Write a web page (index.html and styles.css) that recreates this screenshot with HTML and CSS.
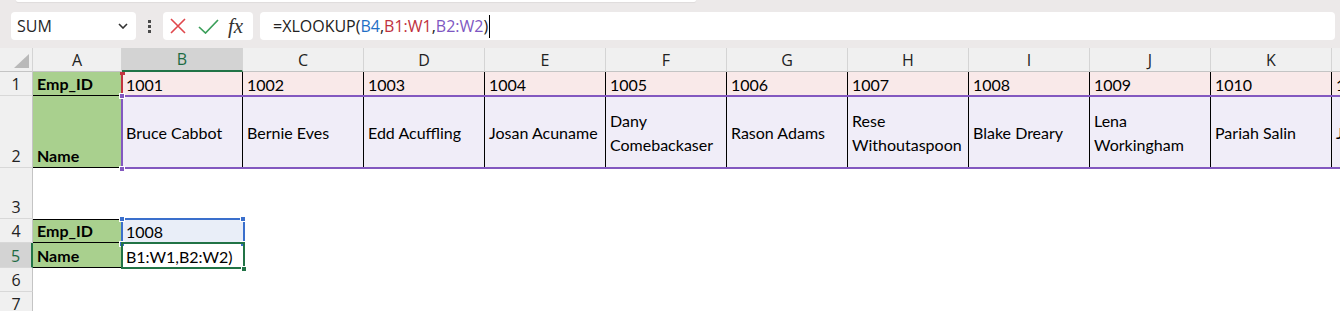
FILE: index.html
```html
<!DOCTYPE html>
<html>
<head>
<meta charset="utf-8">
<link rel="stylesheet" href="styles.css">
</head>
<body>
<div class="top"><div class="ribbon-edge"></div></div>
<div class="fbar">
  <div class="namebox"><span>SUM</span>
    <svg class="chev" width="10" height="6" viewBox="0 0 10 6"><path d="M1 1 L5 5 L9 1" fill="none" stroke="#333" stroke-width="1.6"/></svg>
  </div>
  <div class="dots"><i></i><i></i><i></i></div>
  <div class="fxbox">
    <svg width="16" height="16" viewBox="0 0 16 16"><path d="M1 1 L15 15 M15 1 L1 15" stroke="#e0474c" stroke-width="1.6" fill="none"/></svg>
    <svg class="check" width="21" height="15" viewBox="0 0 21 15"><path d="M1 8 L7.5 14 L20 1" stroke="#3b9f5a" stroke-width="1.7" fill="none"/></svg>
    <span class="fx">fx</span>
  </div>
  <div class="formula">=XLOOKUP(<span class="fb">B4</span>,<span class="fr">B1:W1</span>,<span class="fp">B2:W2</span>)<span class="caret"></span></div>
</div>

<div class="sheet">
  <div class="h corner"><svg width="16" height="15" viewBox="0 0 16 15"><polygon points="15,0 15,14 0,14" fill="#b9b9b9"/></svg></div>
  <div class="h">A</div><div class="h sel">B</div><div class="h">C</div><div class="h">D</div><div class="h">E</div><div class="h">F</div><div class="h">G</div><div class="h">H</div><div class="h">I</div><div class="h">J</div><div class="h">K</div><div class="h">L</div>

  <div class="r">1</div>
  <div class="c g b bb">Emp_ID</div>
  <div class="c p1">1001</div><div class="c p1">1002</div><div class="c p1">1003</div><div class="c p1">1004</div><div class="c p1">1005</div><div class="c p1">1006</div><div class="c p1">1007</div><div class="c p1">1008</div><div class="c p1">1009</div><div class="c p1">1010</div><div class="c p1">1011</div>

  <div class="r">2</div>
  <div class="c g b bb">Name</div>
  <div class="c p2">Bruce Cabbot</div><div class="c p2">Bernie Eves</div><div class="c p2">Edd Acuffling</div><div class="c p2">Josan Acuname</div><div class="c p2">Dany Comebackaser</div><div class="c p2">Rason Adams</div><div class="c p2">Rese Withoutaspoon</div><div class="c p2">Blake Dreary</div><div class="c p2">Lena Workingham</div><div class="c p2">Pariah Salin</div><div class="c p2">Jo Mama</div>

  <div class="r">3</div><div class="c rest"></div>

  <div class="r">4</div>
  <div class="c g b bb bt">Emp_ID</div>
  <div class="c bl4">1008</div>
  <div class="c rest2"></div>

  <div class="r rsel">5</div>
  <div class="c g b bb">Name</div>
  <div class="c">B1:W1,B2:W2)</div>
  <div class="c rest2"></div>

  <div class="r">6</div><div class="c rest"></div>
  <div class="r">7</div><div class="c rest"></div>

  <div class="ov red-line"></div>
  <div class="ov red-h"></div>
  <div class="ov purple"></div>
  <div class="ov ph ph1"></div>
  <div class="ov ph ph2"></div>
  <div class="ov blue"></div>
  <div class="ov bh bh1"></div>
  <div class="ov bh bh2"></div>
  <div class="ov bh bh3"></div>
  <div class="ov bh bh4"></div>
  <div class="ov green"></div>
  <div class="ov fill"></div>
</div>
</body>
</html>
```

FILE: styles.css
```css
* { box-sizing: border-box; }
html, body { margin: 0; padding: 0; }
body {
  width: 1340px;
  height: 311px;
  overflow: hidden;
  background: #ece9e9;
  font-family: Lato, "Liberation Sans", sans-serif;
  color: #000;
}

.top { height: 12px; }
.ribbon-edge {
  margin-left: 16px;
  width: 680px;
  height: 2px;
  background: #fff;
  border-radius: 0 0 4px 4px;
  box-shadow: 0 1px 1px rgba(0,0,0,0.06);
}

.fbar {
  display: flex;
  align-items: center;
  height: 28px;
  padding-left: 11px;
  font-family: "Open Sans", sans-serif;
}
.namebox {
  width: 125px;
  height: 28px;
  background: #fff;
  border-radius: 4px;
  display: flex;
  align-items: center;
  justify-content: space-between;
  padding: 0 8px 0 6px;
  font-size: 16px;
  color: #262626;
}
.dots {
  width: 27px;
  display: flex;
  flex-direction: column;
  align-items: center;
  gap: 2px;
}
.dots i {
  display: block;
  width: 3px;
  height: 3px;
  background: #4a4a4a;
}
.fxbox {
  width: 90px;
  height: 28px;
  background: #fff;
  border-radius: 4px;
  display: flex;
  align-items: center;
  padding-left: 7px;
}
.check { margin-left: 12px; }
.fx {
  margin-left: 9px;
  font-family: "Liberation Serif", serif;
  font-style: italic;
  font-size: 21px;
  color: #333;
  line-height: 1;
}
.formula {
  flex: 1;
  margin: 0 5px 0 7px;
  height: 28px;
  background: #fff;
  border-radius: 4px;
  padding-left: 13px;
  display: flex;
  align-items: center;
  font-size: 16px;
  color: #222;
  white-space: nowrap;
}
.fb { color: #1f6fc5; }
.fr { color: #c0313e; }
.fp { color: #7e57c2; }
.caret {
  display: inline-block;
  width: 1px;
  height: 23px;
  background: #000;
  margin-left: 1px;
}

.sheet {
  position: relative;
  margin-top: 8px;
  width: 1340px;
  height: 263px;
  overflow: hidden;
  background: #fff;
  display: grid;
  grid-template-columns: 33px 89px repeat(11, 121px);
  grid-template-rows: 24px 24px 72px 51px 24px 25px 24px 24px;
}

.h {
  background: #f0f0f0;
  border-right: 1px solid #d4d4d4;
  border-bottom: 1px solid #c4c4c4;
  display: flex;
  align-items: center;
  justify-content: center;
  font-family: "Open Sans", sans-serif;
  font-size: 16px;
  color: #222;
}
.corner {
  justify-content: flex-end;
  align-items: flex-end;
  padding: 0 2px 2px 0;
}
.h.sel {
  background: #d3d3d3;
  border-bottom: 2px solid #217346;
  color: #1d6b43;
}

.r {
  background: #f0f0f0;
  border-right: 1px solid #c4c4c4;
  border-bottom: 1px solid #d8d8d8;
  display: flex;
  align-items: flex-end;
  justify-content: center;
  font-family: "Open Sans", sans-serif;
  font-size: 16px;
  line-height: 20px;
  padding-bottom: 1px;
  color: #222;
}
.r.rsel {
  background: #d3d3d3;
  border-right: 2px solid #217346;
  color: #1d6b43;
}

.c {
  display: flex;
  align-items: flex-end;
  padding: 0 4px 1px;
  font-size: 16px;
  line-height: 20px;
  white-space: nowrap;
  overflow: hidden;
}
.c.g { background: #a9d08e; }
.c.b { font-weight: 700; }
.c.bb { border-bottom: 1px solid #000; }
.c.bt { border-top: 1px solid #000; }
.c.p1 {
  background: #f9e9e9;
  border-right: 1px solid #000;
}
.c.p2 {
  background: #f0edf8;
  border-right: 1px solid #000;
  align-items: center;
  white-space: normal;
  line-height: 24px;
  padding-top: 2px;
  padding-bottom: 0;
}
.c.bl4 { background: #e9eef8; }
.c.rest { grid-column: 2 / -1; }
.c.rest2 { grid-column: 4 / -1; }

.ov { position: absolute; }
.red-line { left: 121px; top: 24px; width: 2px; height: 24px; background: #c2333f; }
.red-h { left: 120px; top: 24px; width: 5px; height: 3px; background: #c2333f; }
.purple {
  left: 121px; top: 47px; width: 1300px; height: 74px;
  border: 2px solid #8358c0;
  border-right: none;
}
.ph { width: 6px; height: 6px; background: #8358c0; border: 1px solid #fff; }
.ph1 { left: 119px; top: 45px; }
.ph2 { left: 119px; top: 118px; }
.blue {
  left: 121px; top: 170px; width: 124px; height: 26px;
  border: 2px solid #3a6fcc;
}
.bh { width: 6px; height: 6px; background: #3a6fcc; border: 1px solid #fff; }
.bh1 { left: 119px; top: 168px; }
.bh2 { left: 240px; top: 168px; }
.bh3 { left: 119px; top: 193px; }
.bh4 { left: 240px; top: 193px; }
.green {
  left: 121px; top: 194px; width: 124px; height: 27px;
  border: 2px solid #217346;
}
.fill { left: 241px; top: 218px; width: 6px; height: 6px; background: #217346; border: 1px solid #fff; }
```
